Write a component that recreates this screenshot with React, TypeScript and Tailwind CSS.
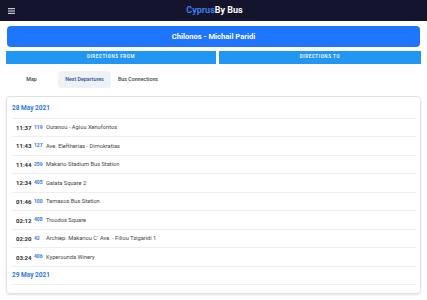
import React from "react";

const rows = [
  { t: "11:37", r: "119", s: "Ouranou - Agiou Xenofontos" },
  { t: "11:43", r: "127", s: "Ave. Eleftherias - Dimokratias" },
  { t: "11:44", r: "259", s: "Makario Stadium Bus Station" },
  { t: "12:34", r: "405", s: "Galata Square 2" },
  { t: "01:46", r: "100", s: "Tamasos Bus Station" },
  { t: "02:12", r: "408", s: "Troodos Square" },
  { t: "02:20", r: "42", s: "Archiep. Makariou C΄ Ave. - Filiou Tsigaridi 1" },
  { t: "03:24", r: "406", s: "Kyperounda Winery" },
];

export default function App() {
  return (
    <div className="w-[427px] h-[300px] bg-white overflow-hidden" style={{ fontFamily: "Roboto, 'Liberation Sans', sans-serif" }}>
      <div className="h-[21px] bg-[#14142c] flex items-center relative">
        <svg className="absolute left-[8px] top-[8px]" width="7" height="6" viewBox="0 0 7 6">
          <rect x="0" y="0" width="7" height="1.2" fill="#c9c9d4" />
          <rect x="0" y="2.4" width="7" height="1.2" fill="#c9c9d4" />
          <rect x="0" y="4.8" width="7" height="1.2" fill="#c9c9d4" />
        </svg>
        <div className="w-full text-center text-[9px] font-bold leading-none pl-[2px]">
          <span className="text-[#3d7ef0]">Cyprus</span>
          <span className="text-white">By Bus</span>
        </div>
      </div>
      <div className="mx-[7px] mt-[5px] h-[21px] rounded-[4px] bg-[#1f75fe] flex items-center justify-center text-white text-[7.6px] font-bold">
        Chilonos - Michail Paridi
      </div>
      <div className="flex gap-[3px] mx-[6px] mt-[4px]">
        <div className="w-[210px] h-[13px] bg-[#2196f3] flex items-center justify-center text-[#eef6ff] text-[4.5px] font-bold tracking-[0.6px] uppercase">
          Directions From
        </div>
        <div className="flex-1 h-[13px] bg-[#2196f3] flex items-center justify-center text-[#eef6ff] text-[4.5px] font-bold tracking-[0.6px] uppercase">
          Directions To
        </div>
      </div>
      <div className="flex items-center mt-[7px] h-[17px] pl-[14px] text-[5.3px] font-medium text-[#444]">
        <div className="w-[35px] text-center">Map</div>
        <div className="ml-[9px] w-[53px] h-[17px] rounded-[4px] bg-[#eef1f5] flex items-center justify-center text-[#1f4f9a]">
          Next Departures
        </div>
        <div className="ml-[7px]">Bus Connections</div>
      </div>
      <div className="mx-[6px] mt-[8px] h-[198px] rounded-[4px] border border-[#e2e2e2] shadow-[0_1px_2px_rgba(0,0,0,0.12)] pl-[5px] pr-[4px]">
        <div className="h-[21.5px] border-b border-[#efefef] flex items-center pt-[3px] text-[6.5px] font-bold text-[#2a78e4]">
          28 May 2021
        </div>
        {rows.map((x) => (
          <div key={x.t} className="h-[18.55px] border-b border-[#efefef] flex items-center pl-[4px]">
            <span className="text-[6px] font-bold text-[#2b2b2b] w-[18px]">{x.t}</span>
            <span className="text-[5px] font-bold text-[#2a78e4] w-[12px]">{x.r}</span>
            <span className="text-[5.7px] text-[#444]">{x.s}</span>
          </div>
        ))}
        <div className="h-[18.55px] border-b border-[#efefef] flex items-center text-[6.5px] font-bold text-[#2a78e4]">
          29 May 2021
        </div>
      </div>
    </div>
  );
}
